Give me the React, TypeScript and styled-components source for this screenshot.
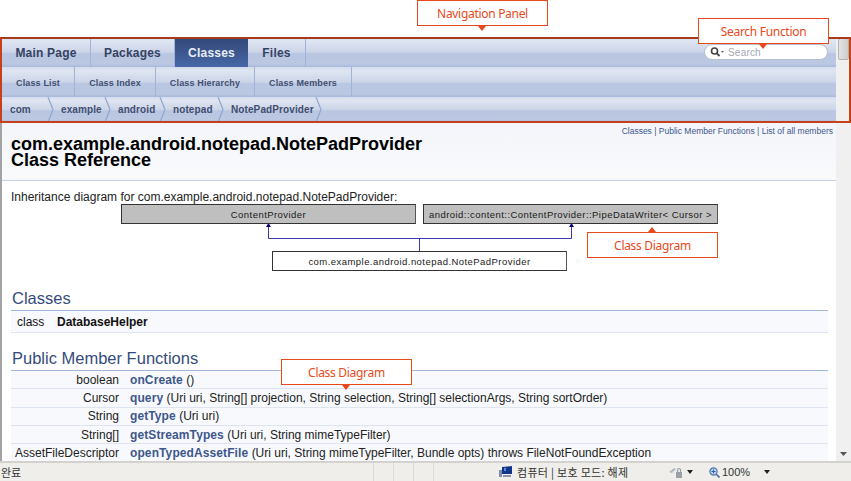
import React from "react";
import styled, { createGlobalStyle } from "styled-components";

const tabs = [
  { label: "Main Page", width: 89 },
  { label: "Packages", width: 84 },
  { label: "Classes", width: 73, active: true },
  { label: "Files", width: 58 },
];

const subTabs = [
  { label: "Class List", width: 73 },
  { label: "Class Index", width: 81 },
  { label: "Class Hierarchy", width: 99 },
  { label: "Class Members", width: 97 },
];

const crumbs = [
  { label: "com", width: 41 },
  { label: "example", width: 57 },
  { label: "android", width: 55 },
  { label: "notepad", width: 58 },
  { label: "NotePadProvider", width: 98 },
];

const members = [
  { type: "boolean", name: "onCreate", args: "()" },
  {
    type: "Cursor",
    name: "query",
    args: "(Uri uri, String[] projection, String selection, String[] selectionArgs, String sortOrder)",
  },
  { type: "String", name: "getType", args: "(Uri uri)" },
  { type: "String[]", name: "getStreamTypes", args: "(Uri uri, String mimeTypeFilter)" },
  {
    type: "AssetFileDescriptor",
    name: "openTypedAssetFile",
    args: "(Uri uri, String mimeTypeFilter, Bundle opts) throws FileNotFoundException",
  },
];

export default function App() {
  return (
    <>
      <GlobalStyle />
      <Page>
        <TopGap />
        <Browser>
          <Viewport>
            <Nav>
              <TabRow>
                {tabs.map((t) => (
                  <Tab key={t.label} $width={t.width} $active={t.active}>
                    {t.label}
                  </Tab>
                ))}
                <SearchBox>
                  <svg width="15" height="10" viewBox="0 0 15 10">
                    <circle cx="4.5" cy="4" r="3" fill="none" stroke="#444" strokeWidth="1.6" />
                    <path d="M6.8 6.3 L9.5 9" stroke="#444" strokeWidth="1.8" />
                    <path d="M11 4 L14 4 L12.5 5.8 Z" fill="#555" />
                  </svg>
                  <SearchText>Search</SearchText>
                </SearchBox>
              </TabRow>
              <SubRow>
                {subTabs.map((t) => (
                  <SubTab key={t.label} $width={t.width}>
                    {t.label}
                  </SubTab>
                ))}
              </SubRow>
              <CrumbRow>
                {crumbs.map((c) => (
                  <Crumb key={c.label} $width={c.width}>
                    {c.label}
                    <CrumbArrow width="8" height="25" viewBox="0 0 8 25">
                      <path d="M1 0 L6 12.5 L1 25" fill="none" stroke="#8fa6d0" strokeWidth="1.2" />
                    </CrumbArrow>
                  </Crumb>
                ))}
              </CrumbRow>
            </Nav>

            <Header>
              <Summary>
                <a>Classes</a> | <a>Public Member Functions</a> | <a>List of all members</a>
              </Summary>
              <Title>
                com.example.android.notepad.NotePadProvider
                <br />
                Class Reference
              </Title>
            </Header>

            <Contents>
              <InheritText>Inheritance diagram for com.example.android.notepad.NotePadProvider:</InheritText>
              <Diagram>
                <Connectors width="851" height="66" viewBox="0 0 851 66">
                  <path
                    d="M268.5 20 V34.5 H571.5 V20 M419.5 34.5 V48"
                    fill="none"
                    stroke="#3a3aa8"
                    strokeWidth="1"
                  />
                  <path d="M268.5 19 L266 23 H271 Z M571.5 19 L569 23 H574 Z" fill="#000080" />
                </Connectors>
                <ClassNode $left={121} $top={0} $filled>
                  ContentProvider
                </ClassNode>
                <ClassNode $left={423} $top={0} $filled>
                  {"android::content::ContentProvider::PipeDataWriter< Cursor >"}
                </ClassNode>
                <ClassNode $left={272} $top={47}>
                  com.example.android.notepad.NotePadProvider
                </ClassNode>
              </Diagram>

              <SectionTitle>Classes</SectionTitle>
              <ClassRow>
                <ClassKind>class</ClassKind>
                <strong>DatabaseHelper</strong>
              </ClassRow>

              <FunctionsTitle>Public Member Functions</FunctionsTitle>
              {members.map((m) => (
                <MemberRow key={m.name}>
                  <MemberType>{m.type}</MemberType>
                  <MemberSig>
                    <MemberName>{m.name}</MemberName> {m.args}
                  </MemberSig>
                </MemberRow>
              ))}
            </Contents>
          </Viewport>

          <Scrollbar>
            <Thumb />
            <svg width="7" height="4" viewBox="0 0 7 4">
              <path d="M0 0 H7 L3.5 4 Z" fill="#555" />
            </svg>
          </Scrollbar>
        </Browser>

        <StatusBar>
          <StatusDone>완료</StatusDone>
          <StatusCell $width={20} />
          <StatusCell $width={20} />
          <StatusCell $width={20} />
          <StatusZone>
            <svg width="14" height="12" viewBox="0 0 14 12">
              <path d="M3 1 L13 0 V8 H3 Z" fill="#12358c" />
              <path d="M5 2 L7 1.8 V5 H5 Z" fill="#5a8ad8" />
              <path d="M0 4 H3 V11 H0 Z" fill="#7d8db0" />
              <path d="M4 9 H12 V11 H4 Z" fill="#8a94a8" />
            </svg>
            컴퓨터 | 보호 모드: 해제
          </StatusZone>
          <StatusTools>
            <svg width="15" height="13" viewBox="0 0 15 13">
              <path d="M1 6 L6 2 L8 3 L4 7 Z" fill="#b4bac2" />
              <rect x="8" y="6" width="6" height="6" fill="#9aa0a8" />
              <path d="M9.5 6 V4 A1.5 1.5 0 0 1 12.5 4 V6" fill="none" stroke="#9aa0a8" strokeWidth="1.2" />
            </svg>
            <DropArrow />
          </StatusTools>
          <ZoomTools>
            <svg width="11" height="11" viewBox="0 0 11 11">
              <circle cx="4.5" cy="4.5" r="3.6" fill="#bcd6f2" stroke="#4a78b0" strokeWidth="1.2" />
              <path d="M7.2 7.2 L10.5 10.5" stroke="#4a6a96" strokeWidth="1.6" />
              <path d="M2.5 4.5 H6.5 M4.5 2.5 V6.5" stroke="#2a62a8" strokeWidth="1" />
            </svg>
            <ZoomLabel>100%</ZoomLabel>
            <DropArrow />
          </ZoomTools>
        </StatusBar>

        <PanelFrame />

        <Callout $left={417} $top={0} $dir="down">
          Navigation Panel
        </Callout>
        <Callout $left={698} $top={18} $dir="down">
          Search Function
        </Callout>
        <Callout $left={587} $top={232} $dir="up">
          Class Diagram
        </Callout>
        <Callout $left={281} $top={359} $dir="down">
          Class Diagram
        </Callout>
      </Page>
    </>
  );
}

const GlobalStyle = createGlobalStyle`
  html, body {
    margin: 0;
    padding: 0;
    background: #ffffff;
  }
  body {
    font-family: "Liberation Sans", Arial, sans-serif;
    overflow: hidden;
  }
`;

const Page = styled.div`
  position: relative;
  display: flex;
  flex-direction: column;
  width: 851px;
  height: 481px;
  overflow: hidden;
`;

const TopGap = styled.div`
  height: 37px;
  flex: none;
`;

const Browser = styled.div`
  display: flex;
  flex: 1;
  min-height: 0;
`;

const Viewport = styled.div`
  flex: 1;
  min-width: 0;
  overflow: hidden;
  border-left: 2px solid #a3a3a3;
  background: #ffffff;
`;

const Nav = styled.div`
  display: flex;
  flex-direction: column;
`;

const stripes = `
  background: linear-gradient(
    to bottom,
    #d3dbec 0%,
    #dfe5f2 12%,
    #ccd5e8 50%,
    #b9c6e1 56%,
    #bcc8e2 90%,
    #a9b9dc 100%
  );
`;

const TabRow = styled.div`
  display: flex;
  align-items: stretch;
  height: 30px;
  padding-top: 1px;
  box-sizing: border-box;
  ${stripes}
`;

const Tab = styled.div<{ $width: number; $active?: boolean }>`
  display: flex;
  align-items: center;
  justify-content: center;
  box-sizing: border-box;
  width: ${(p) => p.$width}px;
  font-size: 12px;
  font-weight: bold;
  letter-spacing: 0.2px;
  color: ${(p) => (p.$active ? "#e8edf6" : "#354263")};
  background: ${(p) =>
    p.$active ? "linear-gradient(to bottom, #33497c 0%, #3c5489 40%, #4668a8 100%)" : "transparent"};
  border-right: ${(p) => (p.$active ? "0" : "1px solid #a0b4da")};
`;

const SearchBox = styled.div`
  display: flex;
  align-items: center;
  gap: 3px;
  box-sizing: border-box;
  width: 124px;
  height: 16px;
  margin: 6px 0 0 398px;
  padding-left: 5px;
  background: #ffffff;
  border: 1px solid #b7bfd0;
  border-radius: 8px;
`;

const SearchText = styled.span`
  font-size: 10px;
  color: #a4a8b0;
  letter-spacing: 0.2px;
`;

const SubRow = styled.div`
  display: flex;
  align-items: stretch;
  height: 30px;
  ${stripes}
`;

const SubTab = styled.div<{ $width: number }>`
  display: flex;
  align-items: center;
  justify-content: center;
  box-sizing: border-box;
  width: ${(p) => p.$width}px;
  padding-top: 1px;
  font-size: 9px;
  font-weight: bold;
  letter-spacing: 0.15px;
  color: #414e70;
  border-right: 1px solid #a0b4da;
`;

const CrumbRow = styled.div`
  display: flex;
  align-items: center;
  height: 25px;
  padding-left: 8px;
  ${stripes}
`;

const Crumb = styled.div<{ $width: number }>`
  position: relative;
  box-sizing: border-box;
  width: ${(p) => p.$width}px;
  font-size: 10px;
  font-weight: bold;
  letter-spacing: 0.1px;
  color: #414e70;
  white-space: nowrap;
  padding-left: ${(p) => (p.$width === 41 ? 0 : 10)}px;
`;

const CrumbArrow = styled.svg`
  position: absolute;
  right: -4px;
  top: -7px;
`;

const Header = styled.div`
  position: relative;
  box-sizing: border-box;
  height: 59px;
  padding: 14px 0 0 9px;
  background: linear-gradient(to bottom, #f3f5fa 0%, #f9fafc 100%);
  border-bottom: 1px solid #c4cfe5;
`;

const Summary = styled.div`
  position: absolute;
  right: 3px;
  top: 3px;
  font-size: 8.5px;
  line-height: 12px;
  color: #3d578c;
  a {
    color: #3d578c;
  }
`;

const Title = styled.div`
  font-size: 18px;
  font-weight: bold;
  line-height: 16px;
  color: #000000;
`;

const Contents = styled.div`
  padding: 9px 8px 0 9px;
`;

const InheritText = styled.div`
  font-size: 12px;
  line-height: 14px;
  color: #222222;
`;

const Diagram = styled.div`
  position: relative;
  height: 66px;
  margin-left: -11px;
`;

const Connectors = styled.svg`
  position: absolute;
  left: 0;
  top: 0;
`;

const ClassNode = styled.div<{ $left: number; $top: number; $filled?: boolean }>`
  position: absolute;
  left: ${(p) => p.$left}px;
  top: ${(p) => p.$top}px;
  box-sizing: border-box;
  width: 295px;
  height: 20px;
  display: flex;
  align-items: center;
  justify-content: center;
  font-size: 9.5px;
  letter-spacing: 0.45px;
  white-space: nowrap;
  color: #1a1a1a;
  background: ${(p) => (p.$filled ? "#bfbfbf" : "#ffffff")};
  border: 1px solid #333333;
  border-right-color: #555555;
`;

const SectionTitle = styled.div`
  box-sizing: border-box;
  height: 23px;
  margin-top: 18px;
  padding: 0 0 0 1px;
  font-size: 16.5px;
  line-height: 20px;
  color: #354c7b;
  border-bottom: 1px solid #a4b6dc;
`;

const FunctionsTitle = styled(SectionTitle)`
  margin-top: 15px;
  height: 23px;
`;

const ClassRow = styled.div`
  display: flex;
  align-items: center;
  box-sizing: border-box;
  height: 22px;
  padding-left: 6px;
  font-size: 12px;
  color: #111111;
  background: #f8f9fc;
  border-bottom: 1px solid #dee4f0;
`;

const ClassKind = styled.span`
  width: 40px;
`;

const MemberRow = styled.div`
  display: flex;
  align-items: center;
  box-sizing: border-box;
  height: 18.3px;
  font-size: 12px;
  color: #222222;
  white-space: nowrap;
  background: #f8f9fc;
  border-bottom: 1px solid #dee4f0;
`;

const MemberType = styled.div`
  width: 108px;
  text-align: right;
  flex: none;
`;

const MemberSig = styled.div`
  margin-left: 11px;
`;

const MemberName = styled.span`
  font-weight: bold;
  color: #3d578c;
  letter-spacing: 0.1px;
`;

const Scrollbar = styled.div`
  display: flex;
  flex-direction: column;
  align-items: center;
  justify-content: space-between;
  box-sizing: border-box;
  width: 15px;
  flex: none;
  padding: 1px 0 5px;
  background: #f0f0f0;
`;

const Thumb = styled.div`
  box-sizing: border-box;
  width: 11px;
  height: 22px;
  background: linear-gradient(to right, #e2e2e2, #cdcdcd);
  border: 1px solid #b4b4b4;
  border-radius: 2px;
`;

const StatusBar = styled.div`
  display: flex;
  align-items: center;
  flex: none;
  box-sizing: border-box;
  height: 20px;
  font-family: "Noto Sans CJK KR", "Liberation Sans", sans-serif;
  font-size: 11px;
  color: #333333;
  background: #f0eeea;
  border-top: 2px solid #d4d2cf;
`;

const StatusDone = styled.div`
  width: 373px;
  padding-left: 1px;
  box-sizing: border-box;
`;

const StatusCell = styled.div<{ $width: number }>`
  box-sizing: border-box;
  width: ${(p) => p.$width}px;
  height: 100%;
  border-left: 1px solid #dedcd8;
`;

const StatusZone = styled.div`
  display: flex;
  align-items: center;
  gap: 4px;
  box-sizing: border-box;
  width: 235px;
  height: 100%;
  padding-left: 65px;
  border-left: 1px solid #dedcd8;
  letter-spacing: 0.3px;
  white-space: nowrap;
`;

const StatusTools = styled.div`
  display: flex;
  align-items: center;
  gap: 4px;
  width: 41px;
`;

const ZoomTools = styled.div`
  display: flex;
  align-items: center;
  font-family: "Liberation Sans", sans-serif;
`;

const ZoomLabel = styled.span`
  width: 42px;
  margin-left: 2px;
`;

const DropArrow = styled.span`
  width: 0;
  height: 0;
  border-left: 3.5px solid transparent;
  border-right: 3.5px solid transparent;
  border-top: 4px solid #222222;
`;

const PanelFrame = styled.div`
  position: absolute;
  left: 0;
  top: 37px;
  box-sizing: border-box;
  width: 851px;
  height: 86px;
  border: 2px solid #c6411b;
  border-top-color: #a83a1c;
  pointer-events: none;
`;

const Callout = styled.div<{ $left: number; $top: number; $dir: "up" | "down" }>`
  position: absolute;
  left: ${(p) => p.$left}px;
  top: ${(p) => p.$top}px;
  box-sizing: border-box;
  width: 131px;
  height: 26px;
  display: flex;
  align-items: center;
  justify-content: center;
  font-family: "Noto Sans", sans-serif;
  font-size: 12px;
  letter-spacing: -0.3px;
  color: #e8491b;
  background: #ffffff;
  border: 1px solid #e8491b;

  &::after {
    content: "";
    position: absolute;
    left: 60px;
    ${(p) => (p.$dir === "down" ? "top: 25px;" : "bottom: 25px;")}
    border-left: 4px solid transparent;
    border-right: 4px solid transparent;
    ${(p) => (p.$dir === "down" ? "border-top: 5px solid #e8491b;" : "border-bottom: 5px solid #e8491b;")}
  }
`;
